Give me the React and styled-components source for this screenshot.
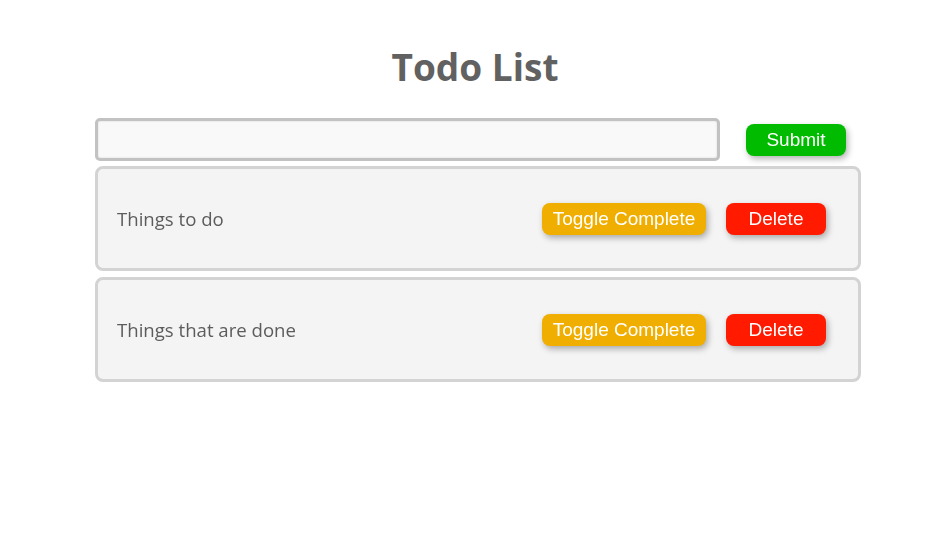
import styled, { createGlobalStyle } from "styled-components";

const GlobalStyle = createGlobalStyle`
  body {
    margin: 0;
    background: #fff;
    font-family: "Open Sans", "Noto Sans", sans-serif;
  }
`;

const todos = [
  { id: 1, text: "Things to do" },
  { id: 2, text: "Things that are done" },
];

const App = () => {
  return (
    <>
      <GlobalStyle />
      <Wrapper>
        <Title>Todo List</Title>
        <Form onSubmit={(ev) => ev.preventDefault()}>
          <Input autoFocus />
          <Button color="#00bb00" width={100}>Submit</Button>
        </Form>
        <List>
          {todos.map((todo) => (
            <Item key={todo.id}>
              <ItemText>{todo.text}</ItemText>
              <Actions>
                <Button color="#efae00" width={164}>Toggle Complete</Button>
                <Button color="#ff1a00" width={100}>Delete</Button>
              </Actions>
            </Item>
          ))}
        </List>
      </Wrapper>
    </>
  );
};

const Wrapper = styled.div`
  width: 766px;
  margin: 0 0 0 95px;
  padding-top: 42px;
  display: flex;
  flex-direction: column;
`;

const Title = styled.h1`
  margin: 0 0 27px;
  text-align: center;
  font-size: 37px;
  font-weight: 700;
  color: #616161;
  line-height: 49px;
  position: relative;
  left: -3px;
`;

const Form = styled.form`
  display: flex;
  align-items: center;
  gap: 26px;
`;

const Input = styled.input`
  box-sizing: border-box;
  width: 625px;
  height: 43px;
  border: 3px solid #c2c2c2;
  border-radius: 5px;
  background: #f9f9f9;
  box-shadow: inset 0 0 2px rgba(0, 0, 0, 0.15);
  padding: 0 8px;
  font-size: 18px;
  outline: none;
  caret-color: #000;
`;

const Button = styled.button`
  box-sizing: border-box;
  width: ${(p) => p.width}px;
  height: 32px;
  border: none;
  border-radius: 8px;
  background: ${(p) => p.color};
  color: #fff;
  font-family: "Liberation Sans", Arial, sans-serif;
  font-size: 19px;
  padding: 0;
  box-shadow: 2px 3px 6px rgba(0, 0, 0, 0.3);
  cursor: pointer;
`;

const List = styled.div`
  display: flex;
  flex-direction: column;
  gap: 6px;
  margin-top: 5px;
`;

const Item = styled.div`
  box-sizing: border-box;
  height: 105px;
  border: 3px solid #d3d3d3;
  border-radius: 8px;
  background: #f4f4f4;
  display: flex;
  align-items: center;
  justify-content: space-between;
  padding: 0 32px 0 19px;
`;

const ItemText = styled.span`
  font-size: 18.6px;
  color: #5c5c5c;
`;

const Actions = styled.div`
  display: flex;
  gap: 20px;
`;

export default App;
